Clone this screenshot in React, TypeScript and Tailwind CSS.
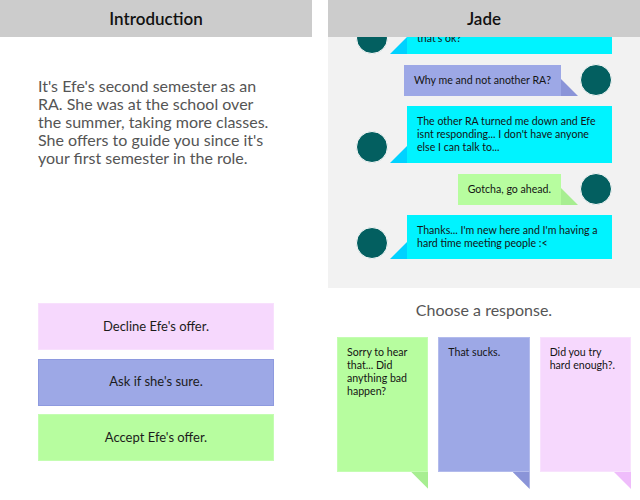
type Msg = { from: "them" | "me"; text: React.ReactNode; color?: "blue" | "green" };

const messages: Msg[] = [
  {
    from: "them",
    text: (
      <>
        Hey, I was hoping I could ask you something real quick, if
        <br />
        that's ok?
      </>
    ),
  },
  { from: "me", text: "Why me and not another RA?", color: "blue" },
  {
    from: "them",
    text: "The other RA turned me down and Efe isnt responding... I don't have anyone else I can talk to...",
  },
  { from: "me", text: "Gotcha, go ahead.", color: "green" },
  { from: "them", text: "Thanks... I'm new here and I'm having a hard time meeting people :<" },
];

const responses = [
  { text: "Sorry to hear that... Did anything bad happen?", body: "bg-[#b7fd9f] border-[#c4fdb2]", tail: "bg-[#a7ee91]" },
  { text: "That sucks.", body: "bg-[#9da8e6] border-[#b3bbec]", tail: "bg-[#8a94d8]" },
  { text: "Did you try hard enough?.", body: "bg-[#f6d8fd] border-[#f8e2fd]", tail: "bg-[#efbdfb]" },
];

function Avatar() {
  return <div className="w-8 h-8 shrink-0 rounded-full bg-[#035f60] border border-[#fafafa]" />;
}

function Bubble({ msg }: { msg: Msg }) {
  if (msg.from === "them") {
    return (
      <div className="flex items-end">
        <Avatar />
        <div className="w-[17px] h-[17px] ml-[2px] shrink-0 bg-[#00d2ff] [clip-path:polygon(100%_0,100%_100%,0_100%)]" />
        <div className="max-w-[206px] bg-[#00f3ff] px-[10px] py-[9px] text-[10.6px] leading-[13px] text-[#141414]">
          {msg.text}
        </div>
      </div>
    );
  }
  const blue = msg.color === "blue";
  return (
    <div className="flex items-end justify-end">
      <div
        className={`max-w-[206px] px-[10px] py-[9px] text-[10.6px] leading-[13px] text-[#141414] ${
          blue ? "bg-[#9da8e6]" : "bg-[#b7fd9f]"
        }`}
      >
        {msg.text}
      </div>
      <div
        className={`w-[17px] h-[17px] mr-[2px] shrink-0 [clip-path:polygon(0_0,0_100%,100%_100%)] ${
          blue ? "bg-[#8a94d8]" : "bg-[#a7ee91]"
        }`}
      />
      <Avatar />
    </div>
  );
}

export default function App() {
  return (
    <div className="w-[640px] h-[500px] flex justify-between bg-white overflow-hidden font-['Lato',sans-serif]">
      {/* Intro panel */}
      <div className="w-[312px] flex flex-col">
        <div className="h-[37px] shrink-0 bg-[#cccccc] flex items-center justify-center text-[17px] font-semibold text-[#111]">
          Introduction
        </div>
        <p className="mt-[40px] px-[38px] text-[16px] leading-[18px] text-[#555]">
          It's Efe's second semester as an RA. She was at the school over the summer, taking more classes. She offers
          to guide you since it's your first semester in the role.
        </p>
        <div className="mt-[136px] px-[38px] flex flex-col gap-[8.5px]">
          <button className="h-[47px] bg-[#f6d8fd] border border-[#f8e0fd] text-[13px] text-[#1c1c1c]">
            Decline Efe's offer.
          </button>
          <button className="h-[47px] bg-[#9da8e6] border border-[#8e9adf] text-[13px] text-[#1c1c1c]">
            Ask if she's sure.
          </button>
          <button className="h-[47px] bg-[#b7fd9f] border border-[#c4fdb2] text-[13px] text-[#1c1c1c]">
            Accept Efe's offer.
          </button>
        </div>
      </div>

      {/* Chat panel */}
      <div className="w-[312px] flex flex-col">
        <div className="h-[37px] shrink-0 bg-[#cccccc] flex items-center justify-center text-[17px] font-semibold text-[#111] relative z-10">
          Jade
        </div>
        <div className="h-[251px] shrink-0 bg-[#f2f2f2] overflow-hidden flex flex-col justify-end gap-[10px] px-[28px] pb-[29px]">
          {messages.map((m, i) => (
            <Bubble key={i} msg={m} />
          ))}
        </div>
        <div className="mt-[12px] text-center text-[16px] leading-[20px] text-[#555]">Choose a response.</div>
        <div className="mt-[17px] px-[9px] flex gap-[10px]">
          {responses.map((r) => (
            <div key={r.text} className="flex-1 flex flex-col">
              <div className={`h-[135px] border px-[9px] py-[8px] text-[10.6px] leading-[13px] text-[#141414] ${r.body}`}>
                {r.text}
              </div>
              <div className="flex justify-end">
                <div className={`w-[17px] h-[17px] [clip-path:polygon(0_0,100%_0,100%_100%)] ${r.tail}`} />
              </div>
            </div>
          ))}
        </div>
      </div>
    </div>
  );
}
